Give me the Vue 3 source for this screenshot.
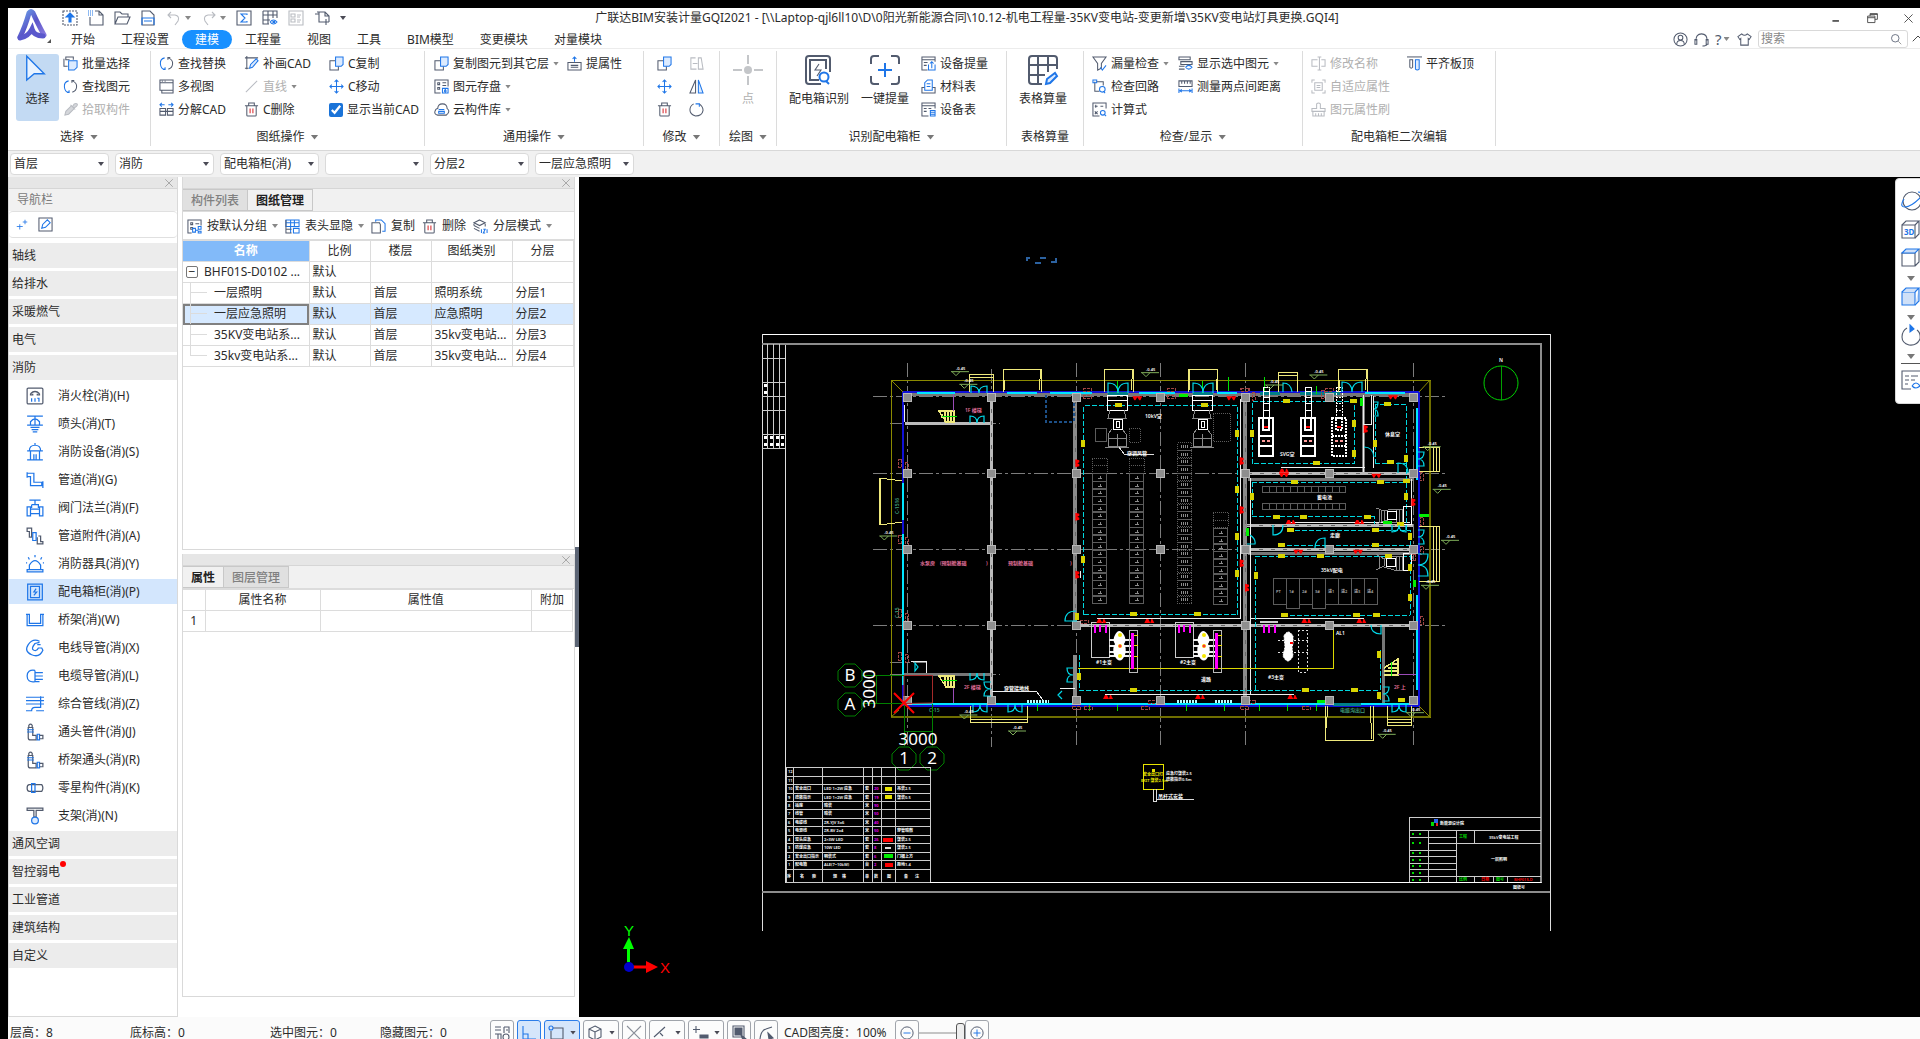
<script setup>
import { h, ref } from 'vue'

const D = '#525b6e'
const B = '#1f76e8'
const G = '#b9bcc2'
const p = (d, c = D, f = 'none') => `<path d="${d}" stroke="${c}" fill="${f}"/>`

const copy = p('M7 5H1v10h9v-4') + p('M7 1h8v8l-2 2H7z', B, '#dcebff')
const trash = p('M1 4h14M5 4V1h6v3M3 4v10q0 1 1 1h8q1 0 1-1V4') + p('M6.500 7v5M9.500 7v5', '#d8262c')
const move = p('M8 1v14M1 8h14M6 3l2-2 2 2M6 13l2 2 2-2M3 6L1 8l2 2M13 6l2 2-2 2', B)
const find = p('M6 2Q1 3 1.500 8.500T6 14M4 14.500h2.500V12', B) + p('M10 2q5 2 4.500 6.500T10 14M12 1.500H9.500V4')
const pipe = p('M2 4h4v7h3v4H4q-2 0-2-2z') + p('M1 6h6M1 8h6M10 10h2v5h-2z', B) + p('M2.500 4V2q1.500-2 3 0v2M12 11h3v3h-3')
const cube = (c, f, t) => p('M1 5h13v13H1z', c, f) + p('M1 5l4-4h13l-4 4M18 1v13l-4 4', c, t)

const icons = {
  up: `<path d="M1 1h14v14H1z" stroke="${D}" stroke-dasharray="2 1"/>` + p('M8 3l4 4H9v5H7V7H4z', B, B),
  newdoc: p('M7 1h4l4 4v10H2V7M11 1v4h4') + `<path d="M0 1h5M0 3h5M0 5h5" stroke="${B}" stroke-dasharray="1 1"/>`,
  open: p('M1 14V2h5l2 2h6v3M1 14L4 7h12l-3 7z'),
  save: p('M2 7V1h8l4 4v10H2z') + p('M2 15V8h12v7M4 11h8', B),
  undo: p('M5 2L2 5l3 3M2 5h7q5 1 3 6l-3 4', G),
  redo: p('M11 2l3 3-3 3M14 5H7Q2 6 4 11l3 4', G),
  sigma: p('M1 1h14v14H1z') + p('M11 5V4H5l4 4-4 4h6v-1', B),
  grid: p('M1 1h14v7M1 1v13h6M1 5h14M1 10h7M6 1v13M11 1v7') + p('M8 12q3.500-4 7 0-3.500 4-7 0M11 11.500h1.500v1H11z', B),
  list: p('M1 1h14v14H1zM3 4h4v3H3zM3 9h4v3H3zM9 5h4M9 7h3M9 10h4M9 12h3', G),
  addpage: p('M3 2h8l4 4v6M5 2v10h4M1 4h4M11 2v4h4') + p('M12 9v6M9 12h6', D),
  cursor: p('M3 1v19l6-5h8z', B, '#e9f3ff'),
  multi: p('M7 4H3V1h8v3M1 3v8h4') + p('M6 5h9v7l-3 3H6z', B, '#dcebff'),
  find,
  pick: p('M2 14l1-4 6-6 3 3-6 6zM8 3l5 5M10 5l2-3q2-1 3 0t-1 3l-3 2', G, '#d4d6da'),
  views: p('M1 1h14v11H1zM1 4h14M3 2.500h1M6 2.500h1M3 12v3h12V6'),
  explode: p('M1 14V7h6v7zM9 14V7h6v7zM1 10h14') + p('M6 3H1M3 1L1 3l2 2M10 3h5M13 1l2 2-2 2', B),
  pen: p('M1 2h14M3 0v14M1 13h4') + p('M6 13l1-4 6-6 2 2-6 7z', B, '#dcebff'),
  line: p('M2 14L14 2', G),
  trash, copy, move,
  store: p('M15 8V1H1v14h6M4 4h2v2H4zM4 9h2v2H4zM9 4h4M9 7h4') + p('M9 10h6v5H9zM12 11l1 2-1 1-1-1z', B),
  cloud: p('M4 14q-4-1-3-4t3-3q0-5 5-5t5 5q3 2 1 5l-2 2z') + p('M5 8h6M5 10h6v2H5z', B),
  attr: p('M1 7h14v8H1zM4 10h8M4 12h8') + p('M8 6V1M6 3l2-2 2 2', B),
  copygray: p('M7 2H2v12h6M4 8h5M10 14V2h3l2 12z', G),
  mirror: p('M7 1v14H1z') + p('M10 1v14h5z', B, '#dcebff'),
  rotate: p('M5 2Q1 4 1 8.500T7 15q7 0 8-6 0-4-4-7') + p('M7 2h4v3', B),
  cross: `<g stroke-width="2">${p('M15 0v9M15 21v9M0 15h9M21 15h9', '#c4c6c9')}</g><circle cx="15" cy="15" r="4" fill="#c4c6c9" stroke="none"/>`,
  boxfind: `<g stroke-width="2">${p('M26 17V4q0-3-3-3H5Q2 1 2 4v22q0 3 3 3h12M22 14V5H6v20h9')}${p('M25 29l-3-3', B)}<circle cx="20" cy="22" r="4.500" stroke="${B}" fill="#fff"/></g>` + p('M15 9l-4 6h6l-4 6', D),
  onekey: `<g stroke-width="2">${p('M1 9V4q0-3 3-3h5M21 1h5q3 0 3 3v5M29 21v5q0 3-3 3h-5M9 29H4q-3 0-3-3v-5')}${p('M15 8v14M8 15h14', B)}</g>`,
  tablebig: `<g stroke-width="2">${p('M29 14V4q0-3-3-3H4Q1 1 1 4v22q0 3 3 3h10M1 10h28M1 20h16M10 1v28M20 1v16')}${p('M18 29l1-5 8-6 2 3-7 7z', B, '#dcebff')}</g>`,
  devup: p('M15 6V1H1v14h6M1 4h14M3 7h4M3 10h3') + p('M8 9v6h7V9M11.500 13V6M9.500 8l2-2 2 2', B),
  mats: p('M4 9H1v6h14V9h-3') + p('M4 12V4l3-3h5v11zM6 5h4M6 8h4', B),
  devtab: p('M15 7V1H1v14h7M1 4h14M3 7h3M3 10h3M8 7h3') + p('M10 9h5v6h-5zM10 11h5M10 13h5', B),
  funnel: p('M1 1h14l-5 7v5l-4 2V8z') + p('M9 12l2 3 4-5', B),
  route: p('M3 3v10h5M5 3h7v4') + p('M1 1h4v3H1zM14 15l-2-2', B) + `<circle cx="11" cy="11" r="3" stroke="${B}" fill="none"/>`,
  calc: p('M15 7V1H1v14h7M4 3v3M3 4.500h3M9 4.500h3M3 10l3 3M3 13l3-3') + p('M15 15l-2-2', B) + `<circle cx="11.500" cy="11.500" r="2.500" stroke="${B}" fill="none"/>`,
  showsel: p('M1 1h12v3H1zM3 6h12v3H3zM1 11h6M1 14h6') + p('M8 12q3.500-4 7 0-3.500 4-7 0', B),
  measure: p('M1 2h14v6H1zM4 2v3M7 2v3M10 2v3M13 2v3') + p('M1 10v5M15 10v5M2 12.500h12M4 11l-2 1.500 2 1.500M12 11l2 1.500-2 1.500', B),
  rename: p('M7 4H1v7h6M11 4h4v7h-4M9 1v14M7 1h4M7 15h4', G),
  adapt: p('M1 4V1h3M12 1h3v3M15 12v3h-3M4 15H1v-3M4 4h8v8H4zM6 7h4M6 9h4', G),
  brush: p('M6 7V2q2-2 4 0v5h5v3H1V7zM2 10v5h12v-5M5 15v-3M8 15v-3M11 15v-3', G),
  align: p('M0 1h16') + p('M3 4h3v8q-1.500 2-3 0z') + p('M9 4h4v10q-2 2-4 0z', B, '#dcebff'),
  user: '<circle cx="8" cy="8" r="7"/><circle cx="8" cy="6" r="2.500"/>' + p('M4 13q0-4 4-4t4 4'),
  headset: p('M2 9Q2 2 8 2t6 7M1 8h2v5H1zM13 8h2v5h-2zM14 13q-1 2-5 2'),
  shirt: p('M5 2L1 5l2 3 1-1v7h8V7l1 1 2-3-4-3q-3 3-6 0z'),
  search: '<circle cx="7" cy="7" r="5"/>' + p('M11 11l4 4', '#888'),
  min: '<path d="M3 11h8" stroke="#444" stroke-width="2"/>',
  restore: p('M5 5V2h9v7h-3M2 5h9v8H2zM2 7h9M5 3h9', '#444'),
  close: p('M3 3l10 10M13 3L3 13', '#444'),
  chev: p('M1 11l7-7 7 7', '#222'),
  plus: p('M5 7v7M1 10h8M12 1v6M9 4h6', B),
  edit: p('M1 1h14v14H1z') + p('M4 12l1-4 5-5 3 3-5 5z', B),
  group: p('M15 7V1H1v14h4M4 4h2v2H4zM4 9h2v2H4zM9 5h4') + p('M6 10h3v4H6zM9 12h3M12 8h3v3h-3zM12 13h3v2h-3z', B),
  header: p('M1 1h14v7H1zM1 4h14M6 1v14M10 1v7', B) + p('M1 1v14h6M1 11h6') + p('M9 10h6v5H9z', B),
  copydoc: p('M9 4H1v11h9V6z') + p('M5 3V1h6l4 4v8h-3', B),
  layers: p('M7 1l6 3-6 3-6-3zM1 7l6 3M1 10l6 3M1 7V5M13 5v3') + p('M9 11v4M11 11h2l-2 4h2M15 11v4', B),
  hydrant: '<rect x="1" y="1" width="14" height="14" rx="1"/>' + p('M4 6q4-4 8 0M4 6v1h2V6M12 6v1h-2V6') + p('M5 10v3M8 10v3M10 10h1.500v3', B),
  sprink: p('M1 1h14M8 1v8M1 9h14M4 9V6q4-5 8 0v3M4 11h8M5 13h6M6 15h4', B),
  device: p('M8 0v2M3 7q0-5 5-5t5 5M1 7h14M4 7v8M12 7v8M1 15h14M7 10v5M9 10v5', B),
  duct: p('M1 2h6v8h7v3H4V5H1zM1 1v5M15 9v6', B),
  valve: p('M3 1h10M8 1v4M5 5h6v3M5 5v3M1 7h3v8H1zM12 7h3v8h-3zM4 9h8M4 13h8', B),
  fitting: p('M1 1h4v8H3V4H1zM11 8h2v5h2v2h-5V9') + p('M6 5h3v7H6z', B),
  alarm: p('M1 15h14v-2H1zM3 13V9q5-8 10 0v4M8 2V0M3 4L2 2M13 4l1-2M1 7H0M15 7h1', B),
  cabinet: p('M1.500 1h13v14h-13zM4 3h8v10H4z', B) + p('M9 5L7 8h2.500L7 11', B),
  tray: p('M0 3h3v8h10V3h3M1 3v10h14V3', B),
  wire: p('M12 2Q6-1 2 5t3 9 10-4l-1-2h-3q-1 3-4 2T8 4l4-1M10 5h3', B),
  cable: p('M8 3Q1 2 1 8t7 5h4M8 5h7M8 8h7M8 11h7M8 3v10', B),
  multiln: p('M0 2h16M0 5h16M0 8h16M13 1v10H8q-3 0-3 3H0M16 14H9', B),
  joint: pipe,
  misc: p('M3 5Q1 5 1 8t2 3h11q2-3 0-6z') + p('M5 4h3v8H5z', B),
  support: p('M1 1h14v2H9v6H7V3H1z') + `<circle cx="8" cy="12" r="3" stroke="${B}" fill="#dcebff"/>`,
  snap: p('M1 2h6M1 5h6M1 9h6v6H1M4 9v6M10 2h5v5M10 2v6M15 2v6M12 5h2') + '<circle cx="12" cy="12" r="3"/>',
  ortho: p('M2 1v13h13M2 9h5v5', B),
  rect: p('M5 3h10v11H3V6') + `<circle cx="3" cy="3" r="2" stroke="${B}" fill="none"/>`,
  box3d: p('M8 1l6 3v8l-6 3-6-3V4zM2 4l6 3 6-3M8 7v8'),
  ex: p('M1 1l14 14M15 1L1 15', '#8a8f99'),
  angle: p('M1 12L12 2M7 8l3 3') + p('M4 14.500h11', '#b4bac4', '#b4bac4'),
  plusbar: p('M4 1v7M1 4.500h7') + p('M8 10h8v3H8z', D, D),
  sel: p('M2 1h11v11H2z') + p('M4 3h7v7H4z', D, D) + p('M10 10l5 4-3 1z', D, D),
  curve: p('M2 14Q3 5 8 4l6-2') + p('M10 8l5 5-4 1z', D, D),
  minus: '<circle cx="8" cy="8" r="7"/>' + p('M4 8h8', B),
  add: '<circle cx="8" cy="8" r="7"/>' + p('M4 8h8M8 4v8', B),
  orbit: '<circle cx="11" cy="10" r="9"/>' + p('M3 8Q-2 16 4 16T19 7q3-6-2-6', B),
  cube3d: cube(D, 'none', 'none'),
  cubetop: p('M1 5h13v13H1zM18 1v13l-4 4') + p('M1 5l4-4h13l-4 4z', B, '#cfe0f8'),
  cubefull: cube(B, '#cfe0f8', '#cfe0f8'),
  spin: p('M6 2Q1 5 1 11t7 8q8 1 11-6 1-6-3-9') + p('M9-1l4 4-4 3z', B, B),
  showlist: p('M19 1H1v18h9M4 6h4M10 6h7M4 10h4M10 10h4M4 14h3') + p('M11 16q4-6 8 0-4 4-8 0', B),
}

const Icon = (props) => h('svg', {
  class: 'icon',
  width: props.s || 15,
  height: props.s || 15,
  viewBox: `0 0 ${props.v || 16} ${props.v || 16}`,
  fill: 'none',
  stroke: D,
  'stroke-width': 1.1,
  'aria-hidden': 'true',
  innerHTML: icons[props.n],
})
Icon.props = ['n', 's', 'v']

const quick = [['up'], ['newdoc'], ['open'], ['save'], ['undo', 1], ['redo', 1], ['sigma'], ['grid'], ['list'], ['addpage']]
const tabs = ['开始', '工程设置', '建模', '工程量', '视图', '工具', 'BIM模型', '变更模块', '对量模块']
const activeTab = ref('建模')

const groups = [
  { k: 'pick', t: '选择', a: 1, cols: [{ big: 'cursor', t: '选择', on: 1 }, [['multi', '批量选择'], ['find', '查找图元'], ['pick', '拾取构件', { off: 1 }]]] },
  { k: 'sheet', t: '图纸操作', a: 1, cols: [
    [['find', '查找替换'], ['views', '多视图'], ['explode', '分解CAD']],
    [['pen', '补画CAD'], ['line', '直线', { off: 1, a: 1 }], ['trash', 'C删除']],
    [['copy', 'C复制'], ['move', 'C移动'], ['', '显示当前CAD', { check: 1 }]]] },
  { k: 'common', t: '通用操作', a: 1, cols: [
    [['copy', '复制图元到其它层', { a: 1 }], ['store', '图元存盘', { a: 1 }], ['cloud', '云构件库', { a: 1 }]],
    [['attr', '提属性']]] },
  { k: 'modify', t: '修改', a: 1, cols: [[['copy', ''], ['move', ''], ['trash', '']], [['copygray', ''], ['mirror', ''], ['rotate', '']]] },
  { k: 'draw', t: '绘图', a: 1, cols: [{ big: 'cross', t: '点', off: 1 }] },
  { k: 'ident', t: '识别配电箱柜', a: 1, cols: [{ big: 'boxfind', t: '配电箱识别' }, { big: 'onekey', t: '一键提量' },
    [['devup', '设备提量'], ['mats', '材料表'], ['devtab', '设备表']]] },
  { k: 'calc', t: '表格算量', cols: [{ big: 'tablebig', t: '表格算量' }] },
  { k: 'check', t: '检查/显示', a: 1, cols: [
    [['funnel', '漏量检查', { a: 1 }], ['route', '检查回路'], ['calc', '计算式']],
    [['showsel', '显示选中图元', { a: 1 }], ['measure', '测量两点间距离']]] },
  { k: 'second', t: '配电箱柜二次编辑', cols: [
    [['rename', '修改名称', { off: 1 }], ['adapt', '自适应属性', { off: 1 }], ['brush', '图元属性刷', { off: 1 }]],
    [['align', '平齐板顶']]] },
]

const selects = [['楼层', '首层'], ['专业', '消防'], ['构件类型', '配电箱柜(消)'], ['构件', ''], ['分层', '分层2'], ['图纸', '一层应急照明']]

const nav = [
  ['轴线'], ['给排水'], ['采暖燃气'], ['电气'], ['消防'],
  ['消火栓(消)(H)', 'hydrant'], ['喷头(消)(T)', 'sprink'], ['消防设备(消)(S)', 'device'], ['管道(消)(G)', 'duct'],
  ['阀门法兰(消)(F)', 'valve'], ['管道附件(消)(A)', 'fitting'], ['消防器具(消)(Y)', 'alarm'], ['配电箱柜(消)(P)', 'cabinet'],
  ['桥架(消)(W)', 'tray'], ['电线导管(消)(X)', 'wire'], ['电缆导管(消)(L)', 'cable'], ['综合管线(消)(Z)', 'multiln'],
  ['通头管件(消)(J)', 'joint'], ['桥架通头(消)(R)', 'joint'], ['零星构件(消)(K)', 'misc'], ['支架(消)(N)', 'support'],
  ['通风空调'], ['智控弱电', '', 1], ['工业管道'], ['建筑结构'], ['自定义'],
]

const rows = [
  ['BHF01S-D0102 ...', '默认', '', '', ''],
  ['一层照明', '默认', '首层', '照明系统', '分层1'],
  ['一层应急照明', '默认', '首层', '应急照明', '分层2'],
  ['35KV变电站系...', '默认', '首层', '35kv变电站...', '分层3'],
  ['35kv变电站系...', '默认', '首层', '35kv变电站...', '分层4'],
]
const sheetTools = [['group', '按默认分组', 1], ['header', '表头显隐', 1], ['copydoc', '复制'], ['trash', '删除'], ['layers', '分层模式', 1]]
const statusTexts = ['层高：8', '底标高：0', '选中图元：0', '隐藏图元：0']
const statusBtns = [['snap'], ['ortho', 0, 1], ['rect', 1, 1], ['box3d', 1], ['ex'], ['angle', 1], ['plusbar', 1], ['sel'], ['curve']]

/* ---- drawing data: left half and right half of the plan use their own origin, three units per pixel ---- */
const L = (list) => list.map(([x, y, ...r]) => [860 + x / 3, 350 + y / 3, ...r])
const R = (list) => list.map(([x, y, ...r]) => [1200 + x / 3, 350 + y / 3, ...r])
const gridX = [907, 991, 1076, 1160, 1245, 1329, 1413]
const gridY = [397, 473, 549, 625, 700]
const columns = gridX.flatMap((x) => gridY.filter((y) => !(x === 1160 && y === 625)).map((y) => [x, y]))
const lampsH = [...L([[775, 165], [1032, 165], [818, 793], [1012, 793], [820, 1020]]),
  ...R([[259, 153], [458, 153], [349, 338], [562, 162], [571, 337], [283, 397], [540, 397], [618, 394], [229, 500], [310, 500], [502, 500], [271, 540], [526, 540], [244, 585], [526, 585], [244, 618], [361, 618], [565, 618], [253, 795], [467, 795], [528, 795], [314, 1020], [461, 1020], [602, 1051], [599, 522]])]
const lampsV = [...L([[670, 279], [670, 627], [1131, 250], [1131, 417], [1131, 557], [1131, 670], [652, 797], [657, 978]]),
  ...R([[156, 250], [463, 218], [463, 308], [525, 280], [618, 325], [618, 439], [156, 439], [631, 557], [631, 650], [167, 674], [631, 742], [538, 911], [538, 1035]])]
const redUp = [...L([[724, 813], [868, 813], [744, 1041], [1020, 1041]]), ...R([[272, 516], [478, 516], [319, 813], [484, 813], [277, 1041], [252, 362]])]
const redDown = [...L([[832, 145], [1114, 145]]), ...R([[579, 142], [252, 375], [529, 377], [295, 605], [474, 605]])]
const redSide = [...L([[652, 340], [652, 500], [652, 674], [1145, 333], [1145, 480], [1145, 640], [1161, 713]]), ...R([[640, 457], [497, 237]])]
const tagsH = [...L([[682, 118], [933, 118], [1154, 118], [673, 814], [650, 1073], [685, 1073], [856, 1073], [877, 1053], [1154, 1073], [682, 140], [933, 140]]), ...R([[135, 118], [388, 118], [319, 1073], [155, 1053]])]
const tagsV = [...L([[119, 340], [119, 569], [119, 790], [119, 918], [138, 350], [138, 575], [138, 802], [138, 925]]), ...R([[663, 380], [663, 513], [641, 600], [663, 600], [663, 812], [160, 138], [368, 133], [641, 620]])]
const levels = [...L([[300, 62], [325, 100], [870, 65], [85, 555], [325, 1092]]), ...R([[355, 72], [695, 287], [725, 415], [750, 568], [690, 703], [560, 1150], [645, 1085], [222, 102]]), [1017, 730]]
const hDoor = (x, y, w, k) => `M${x} ${y}v${-k}q${w / 2} 0 ${w / 2} ${k}q0 ${-k} ${w / 2} ${-k}v${k}`
const vDoor = (x, y, k, w) => `M${x} ${y}h${k}q0 ${w / 2} ${-k} ${w / 2}q${k} 0 ${k} ${w / 2}h${-k}`
const doors = [
  ...[[971, 393, 16, 7], [1108, 393, 20, 10], [1193, 393, 20, 10], [1342, 392, 20, 10], [970, 423, 14, 7], [970, 673, 14, -7], [973, 705, 14, -7], [1008, 705, 14, -7], [1392, 525, 14, -7], [1392, 705, 14, -7]].map((a) => hDoor(...a)),
  ...[[1418, 452, 6, 14], [1418, 530, 6, 14], [1418, 554, 10, 22], [1073, 668, -6, 14], [991, 682, -7, 14], [1383, 687, 6, 14], [1374, 402, 4, 14]].map((a) => vDoor(...a)),
  'M1077 621h-12q0-10 11-10', 'M1273 525v10q10 0 10-10', 'M1325 548v-10q-10 0-10 10', 'M1398 473v-10q10 0 10 10', 'M1381 625v9q-10 0-10-9', 'M1283 392v-9q8 0 9 9', 'M1364 447q9 0 10 10', 'M1250 535q6 4 5 9h-8', 'M1062 691l-4 4 4 4', 'M915 663l3 4-3 4z',
].join('')
const cabinets = [[1092, 473, 17], [1129, 473, 17], [1213, 528, 10]].flatMap(([x, y, n]) =>
  Array.from({ length: n }, (_, i) => [x, Math.round(y + (i * (603 - y)) / n), Math.round((603 - y) / n)]))
const dashedCab = Array.from({ length: 21 }, (_, i) => [1177, Math.round(442 + i * 7.667)])
const legendY = [767, 776, 784, 793, 801, 809, 818, 826, 835, 843, 852, 860, 869, 882]
const legendX = [786, 793, 822, 863, 872, 881, 895, 930]
const legend = [['12', '', '', '', '', ''], ['11', '', '', '', '', ''], ['10', '安全出口', 'LED 1×2W 应急', '套', '20', '吊装2.5'], ['9', '疏散指示', 'LED 1×2W 应急', '套', '19', '壁装0.5'],
  ['8', '插座', '暗装', '米', '90', ''], ['7', '线管', '暗装', '米', '50', ''], ['6', '电缆线', 'ZR-YJV 3x6', '米', '40', ''], ['5', '电源线', 'ZR-BV 2x4', '米', '50', '穿管暗敷'],
  ['4', '双头应急', '2×3W LED', '套', '26', '壁装2.5'], ['3', '防爆应急', '10W LED', '套', '8', '壁装2.5'], ['2', '安全出口指示', '明装式', '套', '6', '门楣上方'], ['1', '配电箱', 'ALE(7~10kW)', '台', '2', '距地1.4']]
const transformers = [1091, 1175]
const svgUnits = [1259, 1301, 1332]
const acUnits = [1107, 1192]
const bays = ['PT', '1#', '2#', '3#', '进1', '进2', '进3', '进4']
const texts = [
  [965, 412, '1F 楼梯', '#e0709a'], [964, 689, '2F 楼梯', '#e0709a'], [920, 565, '水泵房', '#e0709a'], [940, 565, '(预制舱基础', '#e0709a'], [986, 565, ')', '#e0709a'], [1008, 565, '预制舱基础', '#e0709a'], [1070, 565, ')', '#e0709a'],
  [1145, 418, '10kV室', '#fff'], [1280, 456, 'SVG室', '#fff'], [1385, 436, '休息室', '#fff'], [1317, 499, '蓄电池', '#fff'], [1330, 537, '走廊', '#fff'],
  [1321, 572, '35kV配电', '#fff'], [1096, 664, '#1主变', '#fff'], [1180, 664, '#2主变', '#fff'], [1268, 679, '#3主变', '#fff'], [1201, 681, '道路', '#fff'], [1336, 635, 'AL1', '#fff'],
  [1004, 690, '穿管接地线', '#fff'], [1127, 455, '空调风管', '#fff'], [1340, 712, '电缆沟出口', '#3f9a78'], [929, 712, 'C-15', '#3f9a78'], [1394, 689, '2F 上', '#e0709a'],
  [1499, 362, 'N', '#fff'],
]
</script>

<template>
  <div class="app">
    <header class="top">
      <svg class="logo" viewBox="0 0 50 41" aria-label="广联达">
        <defs>
          <linearGradient id="lg" x1="0" y1="0" x2="1" y2="1"><stop offset="0" stop-color="#6aa4ea" /><stop offset="0.5" stop-color="#5a55c8" /><stop offset="1" stop-color="#8a7be0" /></linearGradient>
        </defs>
        <path d="M12 29Q17 19 21 5q2-3 4 0 4 9 11 22" fill="none" stroke="url(#lg)" stroke-width="5" stroke-linecap="round" />
        <path d="M12 30q8-1 12-9 2 7 11 7" fill="none" stroke="#5a58cc" stroke-width="5" stroke-linecap="round" />
        <path d="M39 35h4v-4z" fill="#555" />
      </svg>
      <div class="top-rows">
        <div class="title-row">
          <div class="quick">
            <button v-for="q in quick" :key="q[0]" class="plain" :aria-label="q[0]"><Icon :n="q[0]" s="16" /><i v-if="q[1]" class="caret"></i></button>
            <i class="caret dark"></i>
          </div>
          <h1>广联达BIM安装计量GQI2021 - [\\Laptop-qjl6ll10\D\0阳光新能源合同\10.12-机电工程量-35KV变电站-变更新增\35KV变电站灯具更换.GQI4]</h1>
          <div class="win">
            <button class="plain" aria-label="最小化"><Icon n="min" s="13" /></button>
            <button class="plain" aria-label="还原"><Icon n="restore" s="13" /></button>
            <button class="plain" aria-label="关闭"><Icon n="close" s="13" /></button>
          </div>
        </div>
        <div class="tab-row">
          <nav>
            <button v-for="t in tabs" :key="t" class="tab" :class="{ active: t === activeTab }" @click="activeTab = t">{{ t }}</button>
          </nav>
          <div class="tools">
            <button class="plain" aria-label="用户"><Icon n="user" /></button>
            <button class="plain" aria-label="客服"><Icon n="headset" /></button>
            <button class="plain help">?<i class="caret"></i></button>
            <button class="plain" aria-label="皮肤"><Icon n="shirt" /></button>
            <label class="search"><input type="text" placeholder="搜索" aria-label="搜索" /><Icon n="search" s="12" /></label>
            <button class="plain chev" aria-label="收起"><Icon n="chev" s="12" /></button>
          </div>
        </div>
      </div>
    </header>

    <section class="ribbon">
      <div v-for="g in groups" :key="g.k" class="group" :class="'g-' + g.k">
        <div class="cols">
          <template v-for="(c, i) in g.cols" :key="i">
            <button v-if="c.big" class="big" :class="{ on: c.on, off: c.off }"><Icon :n="c.big" s="30" :v="c.on ? 24 : 30" /><span>{{ c.t }}</span></button>
            <div v-else class="col">
              <template v-for="it in c" :key="it[0] + it[1]">
                <label v-if="it[2]?.check" class="item"><input type="checkbox" checked /><span>{{ it[1] }}</span></label>
                <button v-else class="item" :class="{ off: it[2]?.off }"><Icon :n="it[0]" /><span v-if="it[1]">{{ it[1] }}</span><i v-if="it[2]?.a" class="caret"></i></button>
              </template>
            </div>
          </template>
        </div>
        <div class="group-title"><span>{{ g.t }}</span><i v-if="g.a" class="caret wide"></i></div>
      </div>
    </section>

    <section class="filters">
      <span v-for="s in selects" :key="s[0]" class="filter"><select :aria-label="s[0]"><option>{{ s[1] }}</option></select><i class="caret dark"></i></span>
    </section>

    <main>
      <aside class="nav">
        <div class="strip"><button class="plain" aria-label="关闭导航栏"><Icon n="close" s="12" /></button></div>
        <div class="nav-title">导航栏</div>
        <div class="nav-tools"><button class="plain" aria-label="添加"><Icon n="plus" s="12" /></button><button class="plain" aria-label="编辑"><Icon n="edit" /></button></div>
        <ul>
          <li v-for="n in nav" :key="n[0]" :class="{ sub: n[1], sel: n[0] === '配电箱柜(消)(P)' }">
            <Icon v-if="n[1]" :n="n[1]" s="18" /><span>{{ n[0] }}<i v-if="n[2]" class="dot"></i></span>
          </li>
        </ul>
      </aside>

      <div class="middle">
        <section class="panel sheets">
          <div class="strip"><button class="plain" aria-label="关闭"><Icon n="close" s="12" /></button></div>
          <div class="ptabs"><button>构件列表</button><button class="active">图纸管理</button></div>
          <div class="ptools">
            <button v-for="t in sheetTools" :key="t[1]" class="plain"><Icon :n="t[0]" /><span>{{ t[1] }}</span><i v-if="t[2]" class="caret"></i></button>
          </div>
          <table>
            <colgroup><col class="c-name" /><col class="c-s" /><col class="c-s" /><col class="c-kind" /><col class="c-s" /></colgroup>
            <thead><tr><th class="hot">名称</th><th>比例</th><th>楼层</th><th>图纸类别</th><th>分层</th></tr></thead>
            <tbody>
              <tr v-for="(r, i) in rows" :key="i" :class="{ picked: i === 2 }">
                <td v-for="(c, j) in r" :key="j">
                  <div v-if="j === 0" class="tree" :class="{ root: i === 0, last: i === 4 }"><i class="knob">{{ i ? '' : '−' }}</i><span>{{ c }}</span></div>
                  <template v-else>{{ c }}</template>
                </td>
              </tr>
            </tbody>
          </table>
        </section>
        <section class="panel props">
          <div class="strip"><button class="plain" aria-label="关闭"><Icon n="close" s="12" /></button></div>
          <div class="ptabs"><button class="active">属性</button><button>图层管理</button></div>
          <table>
            <colgroup><col class="c-no" /><col class="c-pname" /><col /><col class="c-add" /></colgroup>
            <thead><tr><th></th><th>属性名称</th><th>属性值</th><th>附加</th></tr></thead>
            <tbody><tr><td class="mid">1</td><td></td><td></td><td></td></tr></tbody>
          </table>
        </section>
      </div>
      <div class="splitter"><i></i></div>

      <div class="canvas">
        <svg class="cad" viewBox="579 177 1341 840" preserveAspectRatio="xMinYMin meet" fill="none" stroke-width="1">
          <g shape-rendering="crispEdges">
            <path d="M1027 261v-3h3M1035 263h6M1040 258h6M1051 262h5v-4" stroke="#2c62a0" stroke-width="2" />
            <!-- sheet frame -->
            <path d="M762.500 931V334.500H1550.500V931M785.500 344V882.500H1541.500" stroke="#ddd" />
            <path d="M762 344H1541V882M762 892H1550" stroke="#8c8c8c" stroke-width="2" />
            <path d="M762.500 334.500H1550M785.500 882.500H1541" stroke="#fff" />
            <path d="M767.500 344v104M773.500 344v104M779.500 344v104M762 358h23M762 382h23M762 396h23M762 410h23M762 434h23M762 448h23" stroke="#ccc" />
            <path d="M765 384v10M765 436v10M771 436v10M777 436v10M782 436v10" stroke="#fff" stroke-width="3" stroke-dasharray="3 4" />
            <!-- axis grid -->
            <g stroke="#7c7c7c" stroke-dasharray="14 3 3 3">
              <path d="M907.500 363v384M991.500 369v378M1076.500 363v384M1160.500 363v384M1245.500 363v384M1413.500 363v384" />
              <path d="M873 396.500h574M873 473.500h574M873 549.500h574M873 625.500h574M890 423.500h110M890 674.500h110M890 662.500h36" />
            </g>
            <path d="M891.500 380.500h539v337h-539z" stroke="#8b8a00" />
            <path d="M891 717h539M1430 381v336" stroke="#6f6e00" stroke-width="2" />
            <!-- walls -->
            <path d="M905 394h512M1363 394v79M1383 625v79M904 674h87M1248 479h165M1248 553h165" stroke="#777" stroke-width="3" />
            <path d="M1075 397v225M1075 655v48M1245 397v303" stroke="#8a8a8a" stroke-width="4" />
            <path d="M991 397v300M1077 625h336M1248 473h165M1247 525h166M1247 549h166M905 423h86" stroke="#bbb" stroke-width="3" />
            <path d="M991 397v300M1077 625h336M1248 473h150M1247 525h166M1247 549h166M1245 400v300M1075 400v220" stroke="#666" stroke-dasharray="4 8" />
            <path d="M1240.500 399V618.500H1097M1250.500 478V695M1250 618.500h114M1080 571V578M904.500 405v17M1105 694.500h189M1363 395v77M1371 395v29h-8M1373 396v72M1411 479v44M1288 522h122M1281 467h84M992 691h44l7 9M911 661h15v12M1060 688h15" stroke="#eee" />
            <path d="M902.500 705.500V391.500H1418.500V706.500z" stroke="#1010d8" stroke-width="2" />
            <path d="M903 483v37M903 534v151M910 704h503M1417 408v72M1417 595v95M917 393h38M1007 393h30M1050 393h42M1139 393h36M1217 393h20M1365 393h40" stroke="#00e5ff" stroke-width="2" />
            <path d="M1260 393h20M1300 393h40M1108 393h20M1193 393h20M1333 704h28" stroke="#007f88" stroke-width="3" />
            <path d="M1083.500 614.500V405.500H1237.500V614.500zM1252 463.500V401.500H1354.500V463.500zM1375.500 463.500V404.500H1406.500V530M1375 463.500h31M1252 482.500h154M1252.500 482v34M1252 516.500h122v7M1288 530.500h122.500V615M1280 545.500h130M1255.500 690V556.500H1410M1283 615.500h127M1079 655v35.500H1380M1380.500 650v50" stroke="#00d7df" stroke-dasharray="5 2" />
            <path d="M1045.500 395v26.500h28V395" stroke="#1d5088" stroke-dasharray="3 2" stroke-width="2" />
            <path d="M1078 668.500h255V625" stroke="#dcd800" />
            <!-- canopies -->
            <g stroke="#efe97c">
              <path d="M1005 390l-2-21h38l-2 21M1003 369v23M1041 369v23M1105 390l-1-21h29l-2 21M1104 369v23M1133 369v23M1190 390l-1-21h29l-2 21M1188 369v23M1217 369v23M1340 390l-2-21h29l-2 21M1338 369v23M1367 369v23M969 392v-18h24v18M969 377h24M1278 392v-20h19v20M1278 375h19" />
              <path d="M902 481l-22-3v47l22-3M879 478v47M1419 447h20v24h-20M1433 447v24M1436 447v24M1419 526h20v55h-20M1433 526v55M1436 526v55M970 706v16h57v-16M970 719h57M1325 706v34h48v-34M1328 706l-3 33M1370 706l2 33M1387 706v19h24v-19M1387 719h24M1387 722h24" />
              <path d="M939 411h15v11h-8zM942 414v4M945 411v11M948 411v11M951 411v11M939 676h15v11h-8zM945 676v9M948 676v11M951 676v11M1384 668l14-9v16h-14M1384 671h14M1388 668h10M1391 664h7" stroke-width="1.500" />
            </g>
            <path d="M953.500 394v17M953.500 688v15M1398 674.500h18" stroke="#9a4bb8" />
            <path d="M942 416.500h15M942 680.500h15M1391.500 662v14M1037 705v6M1089.500 705v6M1117.500 705v6M1186.500 705v6M1224.500 705v6M1259.500 705v6M1287.500 705v6M1316.500 705v6M1117.500 381v12M1202.500 381v12M1228.500 377v14M1264.500 377v15M1316.500 386v8" stroke="#00e000" />
            <!-- cabinets -->
            <g stroke="#5c5c5c">
              <g v-for="(c, i) in cabinets" :key="'c' + i"><rect :x="c[0] + 0.5" :y="c[1] + 0.5" width="14" :height="c[2]" /><path :d="`M${c[0] + 6} ${c[1] + 5}h4M${c[0] + 8} ${c[1] + 3}v3`" stroke="#8a8a8a" /></g>
              <g stroke-dasharray="1 1"><g v-for="(c, i) in dashedCab" :key="'d' + i"><rect :x="c[0] + 0.5" :y="c[1] + 0.5" width="14" height="8" /><path :d="`M${c[0] + 4} ${c[1] + 4}h7`" stroke="#8a8a8a" stroke-width="3" /></g>
                <path d="M1092 458h15v15h-15zM1092 465h15M1129 458h15v15h-15zM1129 465h15M1213 512h15v15h-15zM1213 520h15M1213 413h17v28h-17zM1129 428h11v14h-11z" /></g>
              <path d="M1095 428h11v13h-11zM1262 486.500h83v6h-83zM1262 503.500h83v6h-83z" />
              <path v-for="i in 11" :key="'k' + i" :d="`M${1262 + i * 7} 486v6M${1262 + i * 7} 503v6`" />
              <rect v-for="(b, i) in bays" :key="b" :x="1273.500 + i * 13" y="578.500" width="13" :height="i === 1 || i === 3 ? 30 : 26" />
            </g>
            <!-- ventilation units -->
            <g v-for="x in acUnits" :key="'a' + x" stroke="#888">
              <path :d="`M${x} 395h20v15h-20zM${x} 400h20`" stroke="#fff" />
              <path :d="`M${x + 3} 410l-2 8h18l-2-8M${x + 5} 429l-4 5v12h18v-12l-4-5M${x + 1} 438h18M${x + 10} 434v13M${x - 2} 447h24`" />
              <rect :x="x + 6" y="419" width="9" height="10" stroke="#fff" /><path :d="`M${x + 9} 421h3v6h-3z`" stroke="#fff" />
            </g>
            <path d="M1119 447l5 7h30" stroke="#ddd" />
            <g stroke="#888"><path d="M1376 508l8 3v10l-8 3M1384 511l8-2h10v13h-10l-8-2M1376 554l8 5v7l-8 4M1384 559l10-3h8v14h-8l-10-3M1379 509v14M1381 510v12M1379 556v13M1396 510v12M1399 510v12M1396 557v13M1399 557v13" /><path d="M1387 511h9v8h-9zM1386 558h9v8h-9zM1403 506h8v18h-8zM1403 553h8v17h-8z" stroke="#fff" /></g>
            <!-- SVG units -->
            <g v-for="(x, i) in svgUnits" :key="'s' + x" stroke="#fff">
              <path :d="`M${x + 4} 387h6v31h-6zM${x + 4} 391h6M${x + 4} 397h6M${x + 4} 403h6M${x + 4} 410h6`" :stroke-dasharray="i === 2 ? '2 1' : ''" />
              <path :d="`M${x} 418h14v38h-14zM${x} 436h14M${x} 446h14M${x + 4} 418h6v12h-6z`" stroke-width="2" :stroke-dasharray="i === 2 ? '2 1' : ''" />
              <path :d="`M${x + 3} 441h3M${x + 8} 441h3`" stroke="#f99" stroke-width="2" /><path :d="`M${x + 5} 427h4`" stroke="#f00" stroke-width="2" />
            </g>
            <!-- transformers -->
            <g v-for="x in transformers" :key="'t' + x">
              <path :d="`M${x + 0.5} 622h18v35h-18z`" stroke="#ccc" />
              <path :d="`M${x + 4} 625v8M${x + 9} 625v7M${x + 15} 625v8`" stroke="#f0f" stroke-width="2" />
              <path :d="`M${x + 18} 640h22M${x + 18} 646h22M${x + 18} 652h22M${x + 18} 656h22`" stroke="#eee" stroke-width="2" />
              <path :d="`M${x + 38} 630h8v42h-8z`" stroke="#bbb" />
              <path :d="`M${x + 40} 635h7M${x + 40} 645h7M${x + 40} 656h7`" stroke="#f0e000" />
              <path :d="`M${x + 41} 633v36`" stroke="#f0f" stroke-width="3" />
            </g>
            <path d="M1260 622h18" stroke="#ccc" stroke-width="2" /><path d="M1264 625v8M1269 625v8M1275 625v8" stroke="#f0f" stroke-width="2" />
            <path d="M1298 630h9v42h-9zM1278 640h30M1278 652h30" stroke="#ddd" stroke-dasharray="2 2" />
            <!-- lamps -->
            <rect v-for="(c, i) in lampsH" :key="'h' + i" :x="c[0] - 3" :y="c[1] - 2" width="7" height="4" fill="#d8d400" />
            <rect v-for="(c, i) in lampsV" :key="'v' + i" :x="c[0] - 2" :y="c[1] - 3" width="4" height="7" fill="#d8d400" />
            <rect v-for="(c, i) in tagsH" :key="'th' + i" :x="c[0] - 4" :y="c[1] - 1" width="8" height="3" stroke="#a04444" stroke-dasharray="3 1" />
            <rect v-for="(c, i) in tagsV" :key="'tv' + i" :x="c[0] - 1" :y="c[1] - 4" width="3" height="8" stroke="#a04444" stroke-dasharray="3 1" />
            <path d="M1179 395h9M1383 522h9M1317 701h8" stroke="#0e0" stroke-width="3" /><path d="M1361 398v8M1414 580v7M1247 528v8M1419 515h10" stroke="#0e0" stroke-width="3" />
            <path d="M1027 701h22M1177 701h20M1215 701h18" stroke="#bff" stroke-width="3" stroke-dasharray="2 1" />
            <rect v-for="(c, i) in columns" :key="'p' + i" :x="c[0] - 4" :y="c[1] - 4" width="8" height="8" fill="#8e8e8e" stroke="#b8b8b8" />
          </g>
          <g fill="#f00">
            <path v-for="(c, i) in redUp" :key="'u' + i" :d="`M${c[0] - 5} ${c[1] + 2}l2-4h2l2 4 1-4h1l2 4z`" />
            <path v-for="(c, i) in redDown" :key="'w' + i" :d="`M${c[0] - 5} ${c[1] - 2}h10l-2 4h-1l-2-3-2 3h-1z`" />
            <path v-for="(c, i) in redSide" :key="'x' + i" :d="`M${c[0] - 2} ${c[1] - 4}l4 1v2l-2 1 2 1v2l-4 1z`" />
          </g>
          <path :d="doors" stroke="#00d8e8" stroke-width="1.200" />
          <path d="M891 380l12 12M1430 380l-11 12M1430 717l-11-11M891 717l8-7" stroke="#8b8a00" />
          <g v-for="x in transformers" :key="'b' + x">
            <path :d="`M${x + 24} 635q4-8 9 0 3 5 0 9 3 5 1 11-5 11-11 0-2-6 1-11-3-4 0-9z`" fill="#fff" />
            <circle v-for="y in [635, 646, 656]" :key="y" :cx="x + 29" :cy="y" r="2" fill="#f5e800" /><circle :cx="x + 29" cy="646" r="1.500" fill="#f33" />
          </g>
          <path d="M1284 636q4-8 9 0v8l-1 3 1 9q-5 10-10 0l2-9z" fill="#fff" stroke="#fff" stroke-dasharray="2 1" /><path d="M1290 643h3" stroke="#f00" stroke-width="2" />
          <path v-for="(c, i) in levels" :key="'l' + i" :d="`M${c[0] - 9} ${c[1] + 1}h18M${c[0] - 8} ${c[1] + 1}l4 4 4-4`" stroke="#7fae5a" />
          <text v-for="(c, i) in levels" :key="'m' + i" :x="c[0] - 4" :y="c[1] - 1" class="tiny mini" fill="#fff">-0.45</text>
          <text v-for="(t, i) in texts" :key="'n' + i" :x="t[0]" :y="t[1]" class="tiny" :fill="t[3]">{{ t[2] }}</text>
          <text v-for="(b, i) in bays" :key="'o' + b" :x="1276 + i * 13" y="593" class="tiny mini" fill="#aaa">{{ b }}</text>
          <text transform="translate(899 514) rotate(-90)" class="tiny" fill="#3f9a78">C-1516</text>
          <text transform="translate(899 618) rotate(-90)" class="tiny" fill="#3f9a78">C-15</text>

          <!-- north arrow -->
          <circle cx="1501" cy="383" r="17" stroke="#00d000" /><path d="M1501.500 366v34" stroke="#00a000" />

          <!-- reference axes -->
          <g stroke="#008000">
            <path d="M862 675.500h70M862 703.500h42M876.500 675v29M904.500 704v42M932.500 704v42M904 731.500h28" />
            <path v-for="(c, i) in [[850, 675], [850, 704], [904, 758], [932, 758]]" :key="'g' + i" :d="`M${c[0] - 5} ${c[1] - 11}h10l7 7v9l-7 7h-10l-7-7v-9z`" />
          </g>
          <path d="M932.500 703V675.500H904V703.500z" stroke="#a52a2a" />
          <path d="M894 693l20 20M914 693l-20 20" stroke="#f00" stroke-width="2" />
          <g class="dim" fill="#fff" text-anchor="middle">
            <text x="850" y="681">B</text><text x="850" y="710">A</text><text x="904" y="764">1</text><text x="932" y="764">2</text>
            <text x="918" y="745">3000</text><text transform="translate(875 689) rotate(-90)">3000</text>
          </g>

          <!-- callout -->
          <g shape-rendering="crispEdges"><rect x="1143.500" y="764.500" width="20" height="25" stroke="#e8e400" /><path d="M1153 789v12h3v-12M1156 799.500h38" stroke="#ddd" /><rect x="1152" y="769" width="3" height="3" fill="#e8e400" /></g>
          <text x="1143" y="776" class="tiny mini" fill="#f5f000">安全出口灯</text><text x="1141" y="782" class="tiny mini" fill="#f5f000">EXIT 壁装2.5m</text>
          <text x="1166" y="775" class="tiny mini" fill="#fff">应急灯壁装2.5</text><text x="1166" y="781" class="tiny mini" fill="#fff">疏散指示0.5m</text><text x="1158" y="798" class="tiny" fill="#fff">吊杆式安装</text>

          <!-- legend -->
          <g shape-rendering="crispEdges" stroke="#ccc">
            <path v-for="y in legendY" :key="'y' + y" :d="`M786 ${y}.5H930`" />
            <path v-for="x in legendX" :key="'x' + x" :d="`M${x}.5 767V882`" />
            <path d="M885 789h7M885 797h7" stroke="#e8e400" stroke-width="4" /><path d="M883 840h10M885 865h8" stroke="#f00" stroke-width="4" /><path d="M884 856h9" stroke="#0e0" stroke-width="4" /><path d="M885 848h6" stroke="#ddd" stroke-width="2" />
          </g>
          <g v-for="(r, i) in legend" :key="'r' + i" class="tiny mini">
            <text x="788" :y="legendY[i] + 6" fill="#fff">{{ r[0] }}</text><text x="795" :y="legendY[i] + 6" fill="#fff">{{ r[1] }}</text>
            <text x="824" :y="legendY[i] + 6" fill="#fff">{{ r[2] }}</text><text x="865" :y="legendY[i] + 6" fill="#fff">{{ r[3] }}</text>
            <text x="874" :y="legendY[i] + 6" fill="#f0f">{{ r[4] }}</text><text x="897" :y="legendY[i] + 6" fill="#fff">{{ r[5] }}</text>
          </g>
          <g class="tiny mini" fill="#fff"><text x="787" y="878">序</text><text x="800" y="878">名</text><text x="812" y="878">称</text><text x="833" y="878">规</text><text x="842" y="878">格</text><text x="865" y="878">单</text><text x="874" y="878">数</text><text x="887" y="878">图</text><text x="904" y="878">备</text><text x="915" y="878">注</text></g>

          <!-- title block -->
          <g shape-rendering="crispEdges" stroke="#ccc">
            <path d="M1409.500 882V817.500H1541M1409 830.500h132M1428.500 830v52M1456.500 830v52M1474.500 830v13M1428 843.500h113M1409 837h47M1409 850h47M1409 856.500h47M1409 863h47M1409 869.500h47M1409 876.500h132M1474.500 876v6M1493.500 876v6M1507.500 876v6" />
            <path d="M1412 834h10M1412 843h10M1412 853h10M1412 860h10M1412 866h10M1412 873h10M1412 880h10" stroke="#0d0" stroke-width="2" stroke-dasharray="2 5" />
            <path d="M1431 824h3" stroke="#0d0" stroke-width="4" /><path d="M1434 821h4" stroke="#2a62e8" stroke-width="4" /><path d="M1436 824h2" stroke="#e22" stroke-width="3" />
          </g>
          <g class="tiny mini" fill="#fff"><text x="1440" y="825">新能源设计院</text><text x="1489" y="839">35kV变电站工程</text><text x="1491" y="861">一层照明</text><text x="1513" y="889">图纸号</text>
            <text x="1481" y="881" fill="#f00">日期</text><text x="1514" y="881" fill="#f00">BHF01S-D</text><text x="1459" y="838" fill="#0d0">工程</text><text x="1459" y="881" fill="#0d0">比例</text><text x="1496" y="881" fill="#0d0">图号</text></g>

          <!-- coordinate gizmo -->
          <path d="M628.500 962v-14" stroke="#0f0" stroke-width="3" /><path d="M623 949l6-12 5 12z" fill="#0f0" />
          <path d="M633 967h14" stroke="#f00" stroke-width="3" /><path d="M646 961l12 6-12 6z" fill="#f00" />
          <circle cx="629" cy="967" r="5" fill="#00c" />
          <text x="629" y="936" class="ax" fill="#0f0">Y</text><text x="665" y="973" class="ax" fill="#f00">X</text>
        </svg>

        <div class="viewbar">
          <button class="plain" aria-label="动态观察"><Icon n="orbit" s="21" v="21" /></button>
          <button class="plain three" aria-label="三维"><Icon n="cube3d" s="20" v="20" /><b>3D</b></button>
          <button class="plain" aria-label="俯视"><Icon n="cubetop" s="20" v="20" /><i class="caret wide"></i></button>
          <button class="plain" aria-label="实体"><Icon n="cubefull" s="20" v="20" /><i class="caret wide"></i></button>
          <button class="plain" aria-label="旋转"><Icon n="spin" s="20" v="20" /><i class="caret wide"></i></button>
          <hr />
          <button class="plain" aria-label="显示设置"><Icon n="showlist" s="20" v="20" /></button>
        </div>
      </div>
    </main>

    <footer>
      <div class="stats"><span v-for="s in statusTexts" :key="s">{{ s }}</span></div>
      <div class="sbtns">
        <button v-for="b in statusBtns" :key="b[0]" :class="{ on: b[2] }" :aria-label="b[0]"><Icon :n="b[0]" s="16" /><i v-if="b[1]" class="caret dark"></i></button>
      </div>
      <label class="bright" for="bright">CAD图亮度：100%</label>
      <div class="sbtns zoom">
        <button aria-label="变暗"><Icon n="minus" s="14" /></button>
        <input id="bright" type="range" min="0" max="100" value="100" />
        <button aria-label="变亮"><Icon n="add" s="14" /></button>
      </div>
    </footer>
  </div>
</template>

<style>
body { background: #000; }
</style>

<style scoped>
* { box-sizing: border-box; }
.app {
  display: flex; flex-direction: column; height: 100vh; padding: 8px 0 0 8px; overflow: hidden;
  background: #000; color: #2b2b2b; font: 12px/16px "Noto Sans", "Noto Sans CJK SC", sans-serif;
}
button, input, select { font: inherit; color: inherit; margin: 0; }
button { cursor: pointer; white-space: nowrap; }
.plain { display: flex; align-items: center; gap: 3px; padding: 0; border: 0; background: none; }
.icon { display: block; flex: none; overflow: visible; }
.caret { flex: none; width: 6px; height: 4px; background: #888; clip-path: polygon(0 0, 100% 0, 50% 100%); }
.caret.dark { background: #4a4a55; }
.caret.wide { width: 8px; height: 5px; background: #777; }

.top { display: flex; height: 41px; background: #fff; border-bottom: 1px solid #ececec; flex: none; }
.logo { width: 50px; height: 41px; flex: none; }
.top-rows { flex: 1; min-width: 0; }
.title-row { display: grid; grid-template-columns: 1fr auto 1fr; align-items: center; height: 20px; }
.quick { display: flex; align-items: center; gap: 10px; padding-left: 4px; }
h1 { margin: 0; padding-right: 44px; font-size: 12px; font-weight: 400; line-height: 20px; white-space: nowrap; }
.win { display: flex; justify-content: flex-end; gap: 23px; padding-right: 5px; }
.tab-row { display: flex; justify-content: space-between; align-items: flex-end; height: 21px; }
nav { display: flex; }
.tab { height: 19px; padding: 0 13px; border: 0; border-radius: 10px; background: none; line-height: 19px; }
.tab.active { background: #1890ff; color: #fff; }
.tools { display: flex; align-items: center; gap: 6px; height: 20px; }
.help { width: 16px; font-size: 15px; color: #525b6e; gap: 2px; }
.search { display: flex; align-items: center; width: 150px; height: 18px; padding: 0 5px 0 2px; border: 1px solid #d9d9d9; border-radius: 3px; }
.search input { flex: 1; min-width: 0; padding: 0; border: 0; outline: 0; background: none; }
.search input::placeholder { color: #888; }
.chev { width: 8px; margin-left: -2px; }

.ribbon { display: flex; height: 102px; padding-top: 2px; background: #fff; border-bottom: 1px solid #d8d8d8; flex: none; }
.group { display: flex; flex-direction: column; height: 95px; border-right: 1px solid #dcdcdc; flex: none; }
.cols { display: flex; height: 70px; padding-top: 1px; flex: none; }
.group-title { display: flex; align-items: center; justify-content: center; gap: 6px; height: 20px; margin-top: 7px; }
.g-pick { width: 143px; } .g-pick .cols { gap: 4px; padding-left: 8px; }
.g-sheet { width: 274px; } .g-sheet .cols { gap: 18px; padding-left: 8px; }
.g-common { width: 219px; } .g-common .cols { gap: 8px; padding-left: 9px; }
.g-modify { width: 76px; } .g-modify .cols { gap: 17px; padding-left: 13px; }
.g-draw { width: 57px; } .g-draw .cols { justify-content: center; }
.g-ident { width: 230px; } .g-ident .cols { gap: 12px; padding-left: 12px; }
.g-calc { width: 77px; } .g-calc .cols { padding-left: 12px; }
.g-check { width: 219px; } .g-check .cols { gap: 9px; padding-left: 8px; }
.g-second { width: 193px; } .g-second .cols { gap: 17px; padding-left: 8px; }
.item { display: flex; align-items: center; gap: 4px; height: 23px; padding: 0; border: 0; background: none; white-space: nowrap; }
.item input { width: 14px; height: 14px; margin: 0; accent-color: #1a73d8; }
.off { color: #b0b0b0; }
.big { display: flex; flex-direction: column; align-items: center; gap: 6px; height: 67px; margin-top: 2px; padding: 1px 0 0; border: 0; border-radius: 3px; background: none; }
.big.on { width: 43px; background: #c3daf3; }

.filters { display: flex; gap: 6px; height: 26px; padding: 2px; background: #f1f1f1; flex: none; }
.filter { position: relative; width: 99px; height: 22px; }
.filter select { width: 100%; height: 22px; padding: 0 3px; border: 1px solid #dadada; border-radius: 4px; background: #fff; appearance: none; }
.filter .caret { position: absolute; right: 5px; top: 9px; pointer-events: none; }

main { display: flex; flex: 1; min-height: 0; background: #fff; }
.strip { display: flex; align-items: center; justify-content: flex-end; height: 12px; padding-right: 2px; background: #e6e6e6; border-bottom: 1px solid #d6d6d6; }
.strip .icon { opacity: 0.45; }
.nav { width: 170px; margin-right: 4px; border: 1px solid #d9d9d9; border-top: 0; flex: none; }
.nav-title { height: 22px; padding: 3px 8px; background: #f1f1f1; color: #7a7a7a; }
.nav-tools { display: flex; align-items: center; gap: 10px; height: 27px; padding-left: 7px; border: 1px solid #e0e0e0; border-width: 1px 0; border-radius: 4px; }
ul { margin: 5px 0 0; padding: 0; list-style: none; }
li { display: flex; align-items: center; height: 25px; margin-bottom: 3px; padding-left: 3px; background: #ececec; }
li.sub { gap: 14px; padding-left: 17px; background: #fff; }
li.sel { background: #d3e6fd; }
li span { position: relative; }
.dot { position: absolute; right: -6px; top: -3px; width: 6px; height: 6px; border-radius: 50%; background: #f00; }

.middle { display: flex; flex-direction: column; gap: 4px; width: 393px; padding-bottom: 20px; flex: none; }
.panel { border: 1px solid #d9d9d9; border-top: 0; min-height: 0; overflow: hidden; }
.sheets { flex: 373; }
.props { flex: 443; }
.ptabs { display: flex; height: 23px; background: #f1f1f1; border-bottom: 1px solid #dcdcdc; }
.ptabs button { padding: 1px 8px 0; border: 1px solid #c8c8c8; border-left-width: 0; background: #e0e0e0; color: #808080; font-weight: 500; }
.ptabs .active { background: #f1f1f1; color: #222; font-weight: 600; }
.ptools { display: flex; align-items: center; gap: 7px; height: 28px; padding: 1px 0 0 4px; border-bottom: 1px solid #dcdcdc; }
.ptools .plain { gap: 5px; }
table { width: 390px; table-layout: fixed; border-collapse: collapse; }
.c-name { width: 126px; } .c-s { width: 61px; } .c-kind { width: 81px; }
.c-no { width: 22px; } .c-pname { width: 115px; } .c-add { width: 41px; }
th, td { height: 21px; padding: 0 3px; border: 1px solid #dcdcdc; border-left-width: 0; font-weight: 400; line-height: 16px; white-space: nowrap; }
.hot { background: #82baf9; color: #fff; font-weight: 600; }
.mid { text-align: center; }
.picked { background: #d6e9ff; }
.picked td:first-child { outline: 2px solid #808080; outline-offset: -2px; }
.tree { display: flex; align-items: center; gap: 16px; height: 20px; padding-left: 4px; }
.tree .knob { position: relative; flex: none; width: 8px; height: 20px; border-left: 1px solid #dcdcdc; font-style: normal; }
.tree .knob::after { content: ""; position: absolute; left: 0; top: 9px; width: 16px; height: 1px; background: #dcdcdc; }
.tree.last .knob { height: 10px; align-self: flex-start; }
.tree.root { gap: 6px; padding-left: 0; }
.root .knob { width: 12px; height: 12px; border: 1px solid #777; border-radius: 2px; line-height: 10px; text-align: center; }
.root .knob::after { display: none; }
.splitter { display: flex; align-items: center; width: 4px; background: #fff; flex: none; }
.splitter i { width: 4px; height: 100px; background: #5b6474; }

.canvas { position: relative; flex: 1; min-width: 0; overflow: hidden; background: #000; }
.cad { display: block; width: 100%; height: 100%; }
.tiny { font-size: 5px; font-weight: 600; }
.mini { font-size: 4px; }
.dim { font-size: 17px; }
.ax { font: 15px/1 "Liberation Sans", sans-serif; text-anchor: middle; }
.viewbar { position: absolute; right: -8px; top: 1px; width: 33px; height: 226px; padding: 12px 0 0 5px; background: #fff; border: 1px solid #d8d8d8; border-radius: 4px; }
.viewbar .plain { flex-direction: column; align-items: flex-start; gap: 8px; margin-bottom: 8px; }
.viewbar .caret { margin-left: 6px; margin-bottom: -2px; }
.three { position: relative; }
.three b { position: absolute; left: 3px; top: 7px; color: #1f76e8; font-size: 8px; line-height: 10px; }
hr { width: 20px; height: 1px; margin: -2px 0 6px; border: 0; background: #555; }

footer { display: flex; align-items: flex-start; height: 22px; padding: 3px 0 0 2px; background: #fbfbfb; flex: none; overflow: hidden; }
.stats { display: flex; width: 480px; padding-top: 5px; flex: none; }
.stats span { width: 120px; flex: none; }
.stats span:nth-child(2) { width: 140px; }
.stats span:nth-child(3) { width: 110px; }
.stats span:nth-child(4) { width: 110px; }
.sbtns { display: flex; align-items: center; gap: 3px; }
.sbtns button { display: flex; align-items: center; gap: 6px; height: 25px; padding: 0 3px; border: 1px solid #a0a4ab; border-radius: 3px; background: #fcfcfc; }
.sbtns button.on { border-color: #2b7de9; background: #d5e6fb; }
.bright { padding: 5px 8px 0 6px; }
.zoom { gap: 0; }
.sbtns.zoom button { padding: 0 4px; }
.zoom input { width: 46px; height: 25px; margin: 0; appearance: none; background: linear-gradient(#c4c4c4, #c4c4c4) center / 100% 2px no-repeat; }
.zoom input::-webkit-slider-thumb { appearance: none; width: 9px; height: 20px; border: 1px solid #555; border-radius: 3px; background: #eee; }
</style>
